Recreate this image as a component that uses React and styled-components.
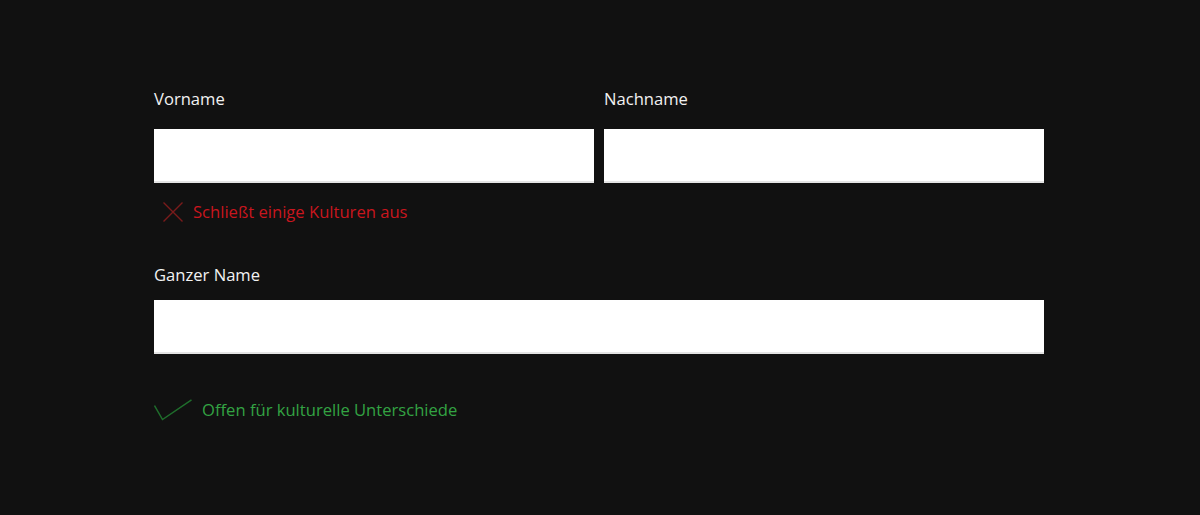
import React from 'react';
import styled, { createGlobalStyle } from 'styled-components';

const GlobalStyle = createGlobalStyle`
    html, body {
        margin: 0;
        background: #111111;
    }
    body {
        font-family: "Open Sans", "Noto Sans", sans-serif;
    }
`;

const Page = styled.div`
    width: 1200px;
    height: 515px;
    box-sizing: border-box;
    padding: 87px 156px 0 154px;
    display: flex;
    flex-direction: column;
`;

const Row = styled.div`
    display: flex;
    gap: 10px;
`;

const Field = styled.div`
    flex: 1;
    display: flex;
    flex-direction: column;
`;

const Label = styled.label`
    color: #f2f2f2;
    font-size: 16.6px;
    line-height: 24px;
    margin-bottom: ${p => p.$space ?? 18}px;
`;

const Input = styled.div`
    height: 52px;
    background: #ffffff;
    border-bottom: 2px solid #e4e4e4;
`;

const Message = styled.div`
    display: flex;
    align-items: center;
    gap: ${p => p.$gap}px;
    padding-left: ${p => p.$indent}px;
    margin-top: ${p => p.$top}px;
    color: ${p => p.$color};
    font-size: 16.6px;
    line-height: 24px;
`;

const Section = styled.div`
    margin-top: ${p => p.$top}px;
`;

function CrossIcon() {
    return (
        <svg width="20" height="20" viewBox="0 0 20 20">
            <path d="M0.5 0.5 L19.5 19.5 M19.5 0.5 L0.5 19.5" stroke="#7a1b1b" strokeWidth="1.4" fill="none" />
        </svg>
    );
}

function CheckIcon() {
    return (
        <svg width="38" height="22" viewBox="0 0 38 22">
            <path d="M0.5 6.5 L8.5 20.5 L37.5 0.8" stroke="#1f6e2c" strokeWidth="1.5" fill="none" />
        </svg>
    );
}

export default function App() {
    return (
        <>
            <GlobalStyle />
            <Page>
                <Row>
                    <Field>
                        <Label>Vorname</Label>
                        <Input />
                    </Field>
                    <Field>
                        <Label>Nachname</Label>
                        <Input />
                    </Field>
                </Row>
                <Message $color="#c9161e" $gap={10} $indent={9} $top={17}>
                    <CrossIcon />
                    <span>Schließt einige Kulturen aus</span>
                </Message>
                <Section $top={39}>
                    <Field>
                        <Label $space={13}>Ganzer Name</Label>
                        <Input />
                    </Field>
                </Section>
                <Message $color="#33a343" $gap={10} $indent={0} $top={44}>
                    <CheckIcon />
                    <span>Offen für kulturelle Unterschiede</span>
                </Message>
            </Page>
        </>
    );
}
